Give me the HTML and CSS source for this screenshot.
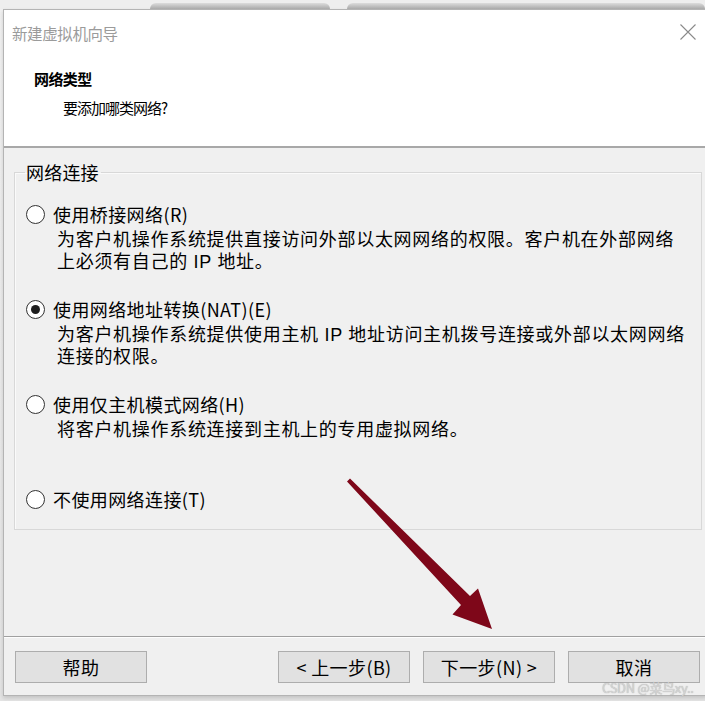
FILE: index.html
```html
<!DOCTYPE html>
<html lang="zh-CN">
<head>
<meta charset="utf-8">
<title>新建虚拟机向导</title>
<link rel="stylesheet" href="styles.css">
</head>
<body>
<div class="desktop">
  <div class="tabs">
    <div class="tab tab-a"></div>
    <div class="tab tab-b"></div>
  </div>
  <div class="dialog">
    <div class="header">
      <div class="titlebar">
        <span class="title">新建虚拟机向导</span>
        <svg class="close" width="16" height="16" viewBox="0 0 16 16"><path d="M0.5 0.5 L15.5 15.5 M15.5 0.5 L0.5 15.5" stroke="#8a8a8a" stroke-width="1.1" fill="none"/></svg>
      </div>
      <div class="heading">网络类型</div>
      <div class="subheading">要添加哪类网络?</div>
    </div>
    <div class="body">
      <fieldset class="group">
        <legend>网络连接</legend>
        <div class="option">
          <div class="opt-label"><span class="radio"></span>使用桥接网络(R)</div>
          <div class="opt-desc">为客户机操作系统提供直接访问外部以太网网络的权限。客户机在外部网络<br>上必须有自己的 IP 地址。</div>
        </div>
        <div class="option">
          <div class="opt-label"><span class="radio checked"></span>使用网络地址转换(NAT)(E)</div>
          <div class="opt-desc">为客户机操作系统提供使用主机 IP 地址访问主机拨号连接或外部以太网网络<br>连接的权限。</div>
        </div>
        <div class="option">
          <div class="opt-label"><span class="radio"></span>使用仅主机模式网络(H)</div>
          <div class="opt-desc">将客户机操作系统连接到主机上的专用虚拟网络。</div>
        </div>
        <div class="option last">
          <div class="opt-label"><span class="radio"></span>不使用网络连接(T)</div>
        </div>
      </fieldset>
    </div>
    <div class="footer">
      <button class="btn">帮助</button>
      <div class="nav">
        <button class="btn">&lt; 上一步(B)</button>
        <button class="btn">下一步(N) &gt;</button>
        <button class="btn">取消</button>
      </div>
    </div>
  </div>
  <svg class="arrow" width="705" height="701" viewBox="0 0 705 701">
    <polygon points="347,481.5 350,478.5 470,596 478,588.5 492,629 452.5,614.5 461,605" fill="#7e0719"/>
  </svg>
  <div class="watermark">CSDN @菜鸟xy..</div>
</div>
</body>
</html>
```
FILE: styles.css
```css
html, body {
  margin: 0;
  padding: 0;
}
body {
  background: #ececec;
  font-family: "Noto Sans CJK SC", "Noto Sans", sans-serif;
  color: #000;
}
.desktop {
  position: relative;
  width: 705px;
  height: 701px;
  overflow: hidden;
  background: linear-gradient(#f1f1f1, #e4e4e4);
}
.tabs {
  height: 9px;
  display: flex;
  align-items: flex-end;
  background: #eeeeee;
}
.tab {
  height: 6px;
  border-radius: 6px 6px 0 0;
  background: linear-gradient(#dcdcdc, #a9a9a9);
}
.tab-a {
  margin-left: 150px;
  width: 180px;
}
.tab-b {
  margin-left: 17px;
  flex: 1;
}
.dialog {
  margin-left: 3px;
  width: 702px;
  height: 685px;
  border: 1px solid #b4b4b4;
  display: flex;
  flex-direction: column;
  background: #f0f0f0;
  box-shadow: 0 2px 4px rgba(0,0,0,0.15);
}
.header {
  height: 136px;
  flex: none;
  background: #fff;
  border-bottom: 2px solid #a8a8a8;
}
.titlebar {
  height: 46px;
  display: flex;
  align-items: center;
  padding: 0 10px 0 8px;
}
.title {
  font-size: 15.5px;
  color: #9b9b9b;
  letter-spacing: -0.4px;
}
.close {
  margin-left: auto;
  margin-top: -2px;
}
.heading {
  margin-top: 12px;
  padding-left: 30px;
  font-size: 15px;
  font-weight: bold;
  line-height: 22px;
  letter-spacing: -0.6px;
}
.subheading {
  margin-top: 7px;
  padding-left: 59px;
  font-size: 15px;
  line-height: 22px;
  letter-spacing: -1px;
}
.body {
  flex: 1;
  display: flex;
  flex-direction: column;
}
.group {
  margin: 12px 4px 0 10px;
  padding: 18px 10px 18px 10px;
  border: 1px solid #d8d8d8;
  box-shadow: inset 1px 1px 0 #fafafa;
  display: flex;
  flex-direction: column;
  gap: 24px;
  min-width: 0;
}
.group legend {
  padding: 0 2px 0 1px;
  font-size: 18px;
  line-height: 24px;
  letter-spacing: 0.2px;
}
.option {
  display: flex;
  flex-direction: column;
}
.option.last {
  margin-top: 22px;
}
.opt-label {
  display: flex;
  align-items: center;
  height: 24px;
  font-size: 18px;
  letter-spacing: 0.4px;
  white-space: nowrap;
}
.radio {
  width: 17px;
  height: 17px;
  border: 1.5px solid #333;
  border-radius: 50%;
  background: #fff;
  margin: 0 8px 0 1px;
  display: flex;
  align-items: center;
  justify-content: center;
  flex: none;
}
.radio.checked::after {
  content: "";
  width: 9px;
  height: 9px;
  border-radius: 50%;
  background: #1e1e1e;
}
.opt-desc {
  margin-top: 3px;
  padding-left: 32px;
  font-family: "Liberation Sans", "Noto Sans CJK SC", sans-serif;
  font-size: 18px;
  line-height: 22px;
  letter-spacing: 0.7px;
  white-space: nowrap;
}
.footer {
  flex: none;
  border-top: 1px solid #a0a0a0;
  box-shadow: inset 0 1px 0 #fdfdfd;
  display: flex;
  align-items: flex-start;
  padding: 14px 0 0 11px;
  box-sizing: border-box;
  height: 59px;
}
.btn {
  width: 132px;
  height: 32px;
  background: #e1e1e1;
  border: 1px solid #adadad;
  font-family: "Noto Sans CJK SC", "Noto Sans", sans-serif;
  font-size: 18px;
  color: #000;
  padding: 0;
  line-height: 28px;
  letter-spacing: 0.4px;
}
.nav {
  margin-left: 131px;
  display: flex;
  gap: 13px;
}
.arrow {
  position: absolute;
  left: 0;
  top: 0;
  pointer-events: none;
}
.watermark {
  position: absolute;
  left: 602px;
  top: 680px;
  font-size: 13px;
  line-height: 16px;
  color: #d4d4d4;
  letter-spacing: -0.3px;
  text-shadow: 0 0 1px rgba(110,110,110,0.6);
}
```
